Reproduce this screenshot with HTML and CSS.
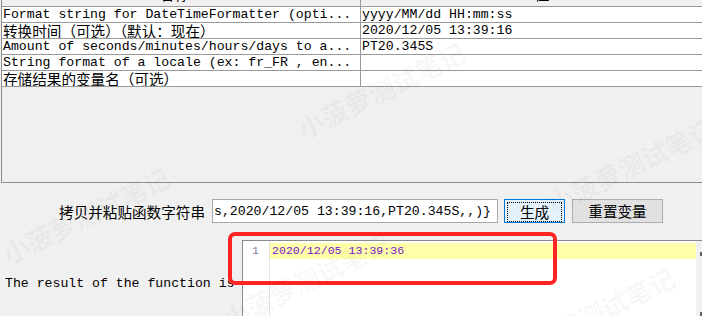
FILE: index.html
```html
<!DOCTYPE html>
<html lang="zh-CN">
<head>
  <meta charset="UTF-8">
  <title>函数助手</title>
  <link rel="stylesheet" href="styles.css">
</head>
<body>
  <div class="params">
    <div class="row head">
      <div class="cell"><span class="cjk">名称：</span></div>
      <div class="cell"><span class="cjk">值</span></div>
    </div>
    <div class="row">
      <div class="cell">Format string for DateTimeFormatter (opti...</div>
      <div class="cell">yyyy/MM/dd HH:mm:ss</div>
    </div>
    <div class="row">
      <div class="cell cjk">转换时间（可选）（默认：现在）</div>
      <div class="cell">2020/12/05 13:39:16</div>
    </div>
    <div class="row">
      <div class="cell">Amount of seconds/minutes/hours/days to a...</div>
      <div class="cell">PT20.345S</div>
    </div>
    <div class="row">
      <div class="cell">String format of a locale (ex: fr_FR , en...</div>
      <div class="cell"></div>
    </div>
    <div class="row">
      <div class="cell cjk">存储结果的变量名（可选）</div>
      <div class="cell"></div>
    </div>
  </div>

  <div class="controls">
    <label class="cjk copy-label">拷贝并粘贴函数字符串</label>
    <div class="func-input"><span>${__timeShift(yyyy/MM/dd HH:mm:ss,2020/12/05 13:39:16,PT20.345S,,)}</span></div>
    <button class="btn btn-primary cjk"><span>生成</span></button>
    <button class="btn cjk">重置变量</button>
  </div>

  <div class="result">
    <div class="result-label">The result of the function is</div>
    <div class="editor">
      <div class="gutter">1</div>
      <div class="lines">
        <div class="line current">2020/12/05 13:39:36</div>
      </div>
      <div class="scroll"><i></i><i></i></div>
    </div>
  </div>

  <!-- 标注框 -->
  <div class="mark"></div>

  <!-- 水印 -->
  <div class="wm">
    <span class="wm-1">小菠萝测试笔记</span>
    <span class="wm-2">小菠萝测试笔记</span>
    <span class="wm-3">小菠萝测试笔记</span>
    <span class="wm-4">小菠萝测试笔记</span>
    <span class="wm-5">小菠萝测试笔记</span>
  </div>
</body>
</html>
```

FILE: styles.css
```css
/* 基础 */
body {
  margin: 0;
  padding: 0;
  width: 702px;
  height: 316px;
  overflow: hidden;
  position: relative;
  background: #f0f0f0;
  font-family: 'Liberation Mono', 'Noto Sans CJK SC', monospace;
  font-size: 13.2px;
  color: #000;
}

.cjk {
  font-family: 'Noto Sans CJK SC', sans-serif;
  font-size: 14.6px;
}

/* 参数表格 */
.params {
  width: 720px;
  height: 182px;
  margin-left: 1px;
  border-left: 1px solid #8e8e8e;
  border-bottom: 1px solid #8e8e8e;
}

.row {
  display: grid;
  grid-template-columns: 359px 1fr;
  height: 16px;
  border-bottom: 1px solid #999;
  background: #fff;
  box-sizing: border-box;
}

.cell {
  line-height: 15px;
  padding-left: 1px;
  white-space: nowrap;
  overflow: hidden;
}

.cell:first-child {
  border-right: 1px solid #999;
}

.head {
  height: 7px;
  background: #f0f0f0;
  overflow: hidden;
}

.head .cell {
  text-align: center;
  margin-top: -14px;
  line-height: 15px;
}

/* 函数字符串 */
.controls {
  display: flex;
  align-items: center;
  margin-top: 16px;
  padding-left: 57px;
  height: 24px;
}

.copy-label {
  width: 148px;
  text-align: right;
  margin-right: 7px;
  white-space: nowrap;
}

.func-input {
  width: 286px;
  height: 24px;
  box-sizing: border-box;
  border: 1px solid #a9a9a9;
  background: #fff;
  display: flex;
  justify-content: flex-end;
  align-items: center;
  padding-right: 6px;
  overflow: hidden;
}

.func-input span {
  flex-shrink: 0;
  white-space: nowrap;
}

.btn {
  height: 24px;
  box-sizing: border-box;
  border: 1px solid #adadad;
  background: #e1e1e1;
  color: #000;
  padding: 0;
  margin-left: 7px;
  width: 91px;
  line-height: 20px;
}

.btn-primary {
  width: 61px;
  margin-left: 6px;
  border-color: #0078d7;
  background: #e5f1fb;
  padding: 2px;
}

.btn-primary span {
  display: block;
  height: 18px;
  line-height: 18px;
  border: 1px dotted #000;
}

/* 结果 */
.result {
  display: flex;
  margin-top: 17px;
  height: 76px;
}

.result-label {
  width: 237px;
  padding-left: 5px;
  margin-top: 36px;
  white-space: nowrap;
  line-height: 16px;
}

.editor {
  flex: 1;
  display: flex;
  background: #fff;
  border-top: 1px solid #8a8a8a;
  border-left: 1px solid #8a8a8a;
}

.gutter {
  width: 27px;
  border-right: 1px solid #e2e2e2;
  padding: 2px 0 0 9px;
  box-sizing: border-box;
  font-size: 11.6px;
  line-height: 16px;
  color: #8a7ba3;
}

.lines {
  flex: 1;
  padding-top: 2px;
}

.line {
  height: 16px;
  line-height: 16px;
  padding-left: 2px;
  font-size: 11.6px;
  color: #7a16cc;
}

.line.current {
  background: #ffffaa;
}

.scroll {
  width: 6px;
  background: #f0f0f0;
  display: flex;
  flex-direction: column;
  align-items: flex-end;
  padding-top: 11px;
  gap: 56px;
}

.scroll i {
  display: block;
  width: 2px;
  height: 4px;
  background: #606060;
}

/* 红色标注框 */
.mark {
  position: absolute;
  left: 228px;
  top: 232px;
  width: 329px;
  height: 53px;
  box-sizing: border-box;
  border: 4px solid #ff2424;
  border-radius: 7px;
}

/* 水印 */
.wm {
  position: absolute;
  left: 0;
  top: 0;
  right: 0;
  bottom: 0;
  pointer-events: none;
}

.wm span {
  position: absolute;
  font-family: 'Noto Sans CJK SC', sans-serif;
  font-weight: bold;
  font-size: 26px;
  line-height: 30px;
  color: rgba(0, 0, 0, 0.045);
  white-space: nowrap;
  transform: rotate(-26deg);
}

.wm-1 {
  left: 290px;
  top: 75px;
}

.wm-2 {
  left: 540px;
  top: 150px;
}

.wm-3 {
  left: -5px;
  top: 200px;
  transform: rotate(-31deg);
}

.wm-4 {
  left: 215px;
  top: 265px;
}

.wm-5 {
  left: 500px;
  top: 300px;
}
```
